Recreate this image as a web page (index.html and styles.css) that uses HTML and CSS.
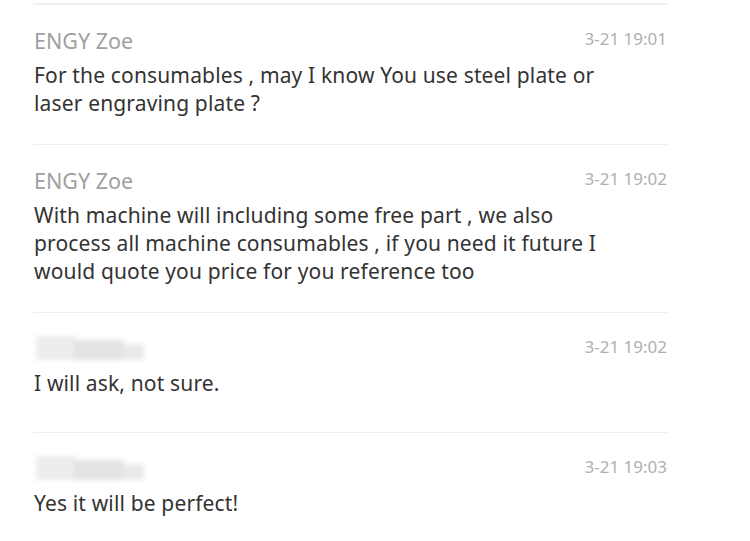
FILE: index.html
```html
<!DOCTYPE html>
<html>
<head>
<meta charset="utf-8">
<link rel="stylesheet" href="styles.css">
</head>
<body>
<div class="list">
  <div class="item">
    <div class="head"><span class="name">ENGY Zoe</span><span class="time">3-21 19:01</span></div>
    <div class="text">For the consumables , may I know You use steel plate or laser engraving plate ?</div>
  </div>
  <div class="item">
    <div class="head"><span class="name">ENGY Zoe</span><span class="time">3-21 19:02</span></div>
    <div class="text">With machine will including some free part , we also process all machine consumables , if you need it future I would quote you price for you reference too</div>
  </div>
  <div class="item">
    <div class="head"><span class="blur"><i class="b1"></i><i class="b2"></i><i class="b3"></i></span><span class="time">3-21 19:02</span></div>
    <div class="text">I will ask, not sure.</div>
  </div>
  <div class="item">
    <div class="head"><span class="blur"><i class="b1"></i><i class="b2"></i><i class="b3"></i></span><span class="time">3-21 19:03</span></div>
    <div class="text">Yes it will be perfect!</div>
  </div>
</div>
</body>
</html>
```
FILE: styles.css
```css
html, body { margin: 0; padding: 0; background: #fff; }
body { font-family: "Noto Sans", "Open Sans", sans-serif; }
.list {
  width: 634px;
  margin-left: 33px;
  margin-top: 3px;
  border-top: 2px solid #efefef;
}
.item {
  box-sizing: border-box;
  min-height: 120px;
  padding: 21px 0 27px 1px;
  border-bottom: 1px solid #eeeeee;
}
.item:last-child { border-bottom: none; }
.head {
  display: flex;
  justify-content: space-between;
  align-items: center;
  height: 28px;
}
.name { font-size: 21.5px; color: #a0a0a0; }
.time { font-size: 17px; color: #b0b0b0; margin-top: -3px; }
.text {
  margin-top: 7px;
  font-size: 21px;
  line-height: 28px;
  letter-spacing: 0.15px;
  color: #333;
  width: 585px;
}
.blur {
  position: relative;
  display: block;
  width: 108px;
  height: 25px;
  margin-left: 2px;
  filter: blur(2px);
}
.blur i { position: absolute; background: #e2e2e2; }
.blur .b1 { left: 0; top: 0; width: 40px; height: 24px; background: #ededed; }
.blur .b2 { left: 38px; top: 4px; width: 50px; height: 20px; background: #e3e3e3; }
.blur .b3 { left: 86px; top: 8px; width: 22px; height: 16px; background: #e9e9e9; }
```
